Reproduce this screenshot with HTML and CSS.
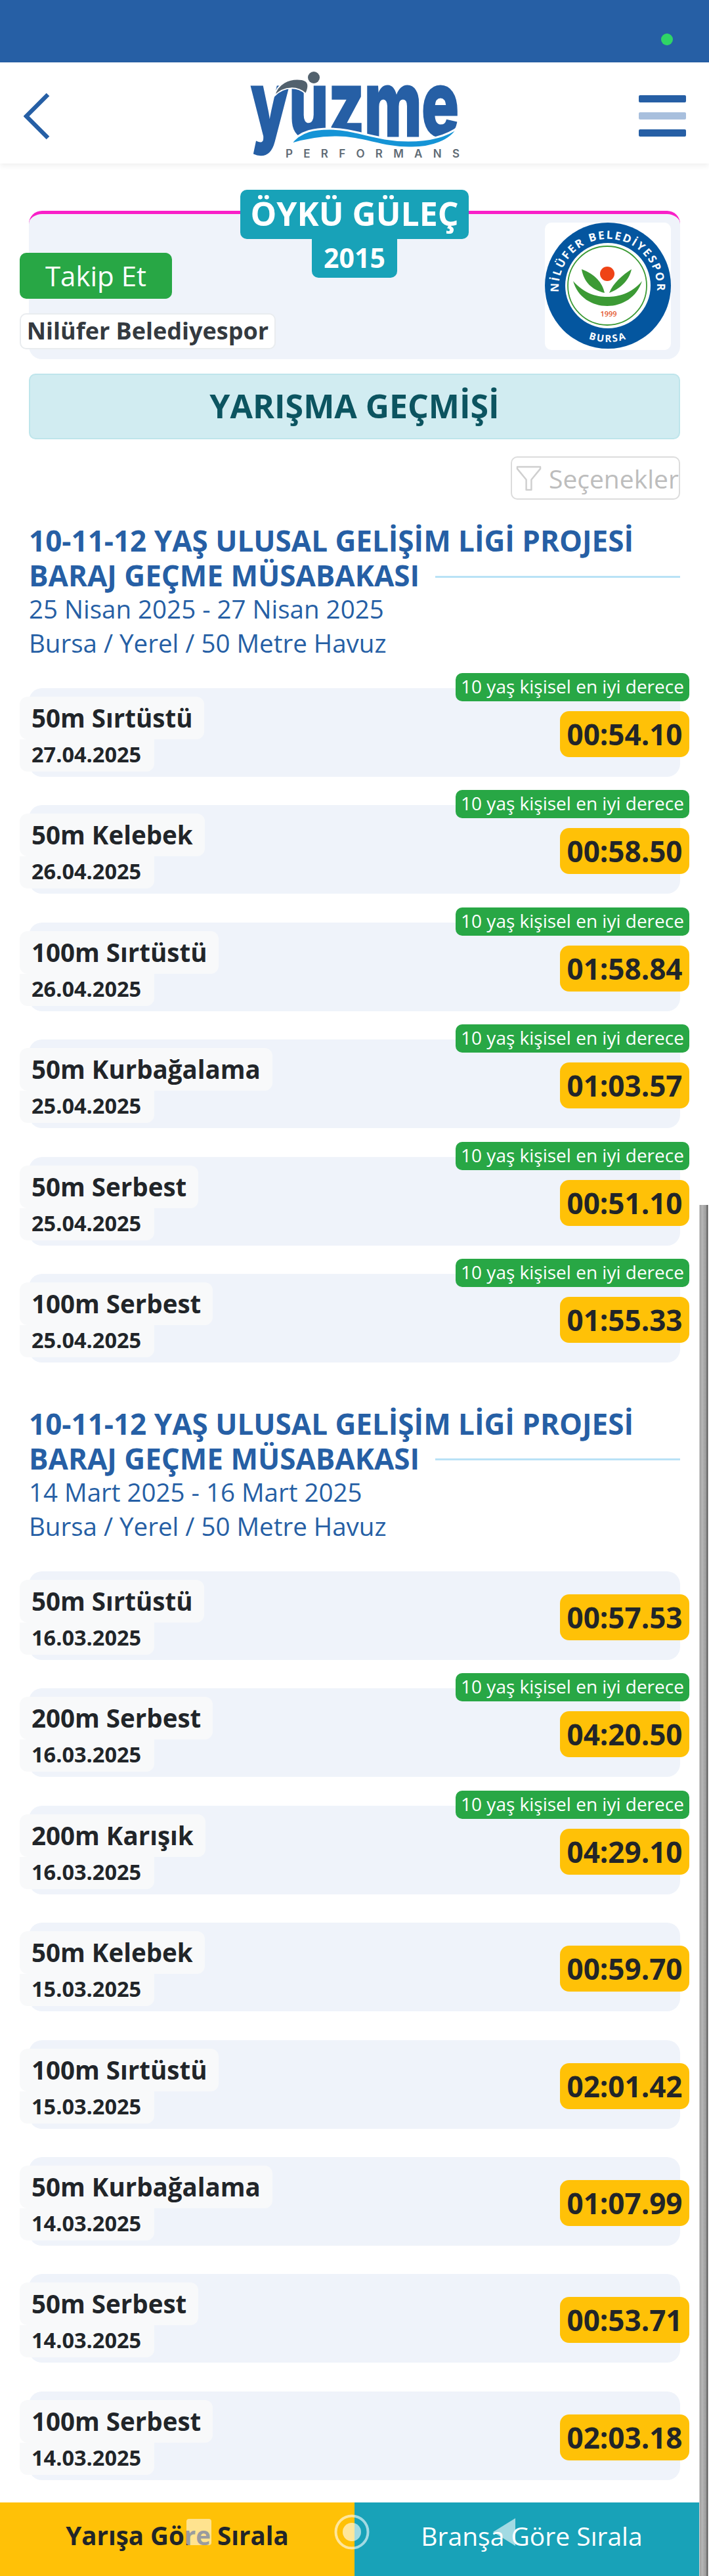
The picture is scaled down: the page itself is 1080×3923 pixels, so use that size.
FILE: index.html
```html
<!DOCTYPE html>
<html lang="tr">
<head>
<meta charset="utf-8">
<title>Yüzme Performans</title>
<link rel="stylesheet" href="styles.css">
</head>
<body>
<div class="page">
  <div class="status"><span class="status-dot"></span></div>
  <header class="topbar">
    <svg class="back" viewBox="0 0 40 72"><path d="M37 3 L4 36 L37 69" fill="none" stroke="#265fa5" stroke-width="6.5" stroke-linejoin="miter"/></svg>
    <svg class="logo" viewBox="0 0 320 132">
      <text class="logo-word" x="0" y="97" textLength="317" lengthAdjust="spacingAndGlyphs">yuzme</text>
      <path d="M36 36 C40 18 58 8 78 11 C88 13 90 20 84 33 C72 22 52 20 36 36 Z" fill="#52616d" stroke="#fff" stroke-width="2"/>
      <circle cx="96" cy="8" r="9" fill="#52616d"/>
      <path d="M60 110 C75 88 100 86 120 86 C160 86 190 104 240 104 C275 104 300 96 316 84 C305 105 275 116 241 115 C200 115 170 99 131 99 C105 99 85 102 60 110 Z" fill="#1594d6" stroke="#fff" stroke-width="3"/>
      <text class="logo-sub" x="53" y="130" textLength="265">PERFORMANS</text>
    </svg>
    <div class="menu"><span class="bar"></span><span class="bar bar-soft"></span><span class="bar"></span></div>
  </header>

  <main class="content">
    <section class="hero">
      <div class="hero-left">
        <button class="follow">Takip Et</button>
        <div class="club-name">Nilüfer Belediyespor</div>
      </div>
      <div class="hero-center">
        <div class="athlete">ÖYKÜ GÜLEÇ</div>
        <div class="year">2015</div>
      </div>
      <div class="hero-right">
        <div class="club-logo">
          <svg viewBox="0 0 192 192">
            <defs>
              <path id="arcTop" d="M22 112 A75 75 0 1 1 170 112"/>
              <path id="arcBot" d="M56 172 A85.5 85.5 0 0 0 136 172"/>
            </defs>
            <circle cx="96" cy="96" r="96" fill="#04569f"/>
            <circle cx="96" cy="96" r="65" fill="#fff"/>
            <circle cx="95" cy="96" r="60" fill="none" stroke="#3c9a35" stroke-width="1.8"/>
            <text class="crest-text"><textPath href="#arcTop" startOffset="50%" text-anchor="middle">NİLÜFER BELEDİYESPOR</textPath></text>
            <text class="crest-text crest-small"><textPath href="#arcBot" startOffset="50%" text-anchor="middle">BURSA</textPath></text>
            <circle cx="95" cy="78" r="11" fill="#ef4316"/>
            <path d="M56 71 C76 78 88 92 91 107 C72 103 59 90 56 71 Z M132 71 C128 90 112 102 98 107 C104 92 118 80 132 71 Z" fill="#3c9a35"/>
            <path d="M43 89 C60 108 78 113 95 113 C112 113 132 108 148 89 C140 114 118 127 95 127 C72 127 50 114 43 89 Z" fill="#3c9a35"/>
            <text class="crest-year" x="97" y="143" text-anchor="middle">1999</text>
          </svg>
        </div>
      </div>
    </section>

    <h1 class="band">YARIŞMA GEÇMİŞİ</h1>

    <div class="options-row">
      <button class="options">
        <svg class="funnel" viewBox="0 0 40 40"><path d="M2 2 H38 V5 L24 22 V38 H16 V22 L2 5 Z" fill="none" stroke="#cfcfcf" stroke-width="2.5" stroke-linejoin="round"/></svg>
        <span>Seçenekler</span>
      </button>
    </div>

    <section class="event">
      <h2 class="event-title">
        <span class="event-line">10-11-12 YAŞ ULUSAL GELİŞİM LİGİ PROJESİ</span>
        <span class="event-line event-line-rule"><span>BARAJ GEÇME MÜSABAKASI</span><i class="rule"></i></span>
      </h2>
      <p class="event-meta">25 Nisan 2025 - 27 Nisan 2025</p>
      <p class="event-meta">Bursa / Yerel / 50 Metre Havuz</p>
      <div class="rows">
        <article class="row"><div class="info"><div class="name">50m Sırtüstü</div><div class="date">27.04.2025</div></div><div class="result"><span class="best">10 yaş kişisel en iyi derece</span><span class="time">00:54.10</span></div></article>
        <article class="row"><div class="info"><div class="name">50m Kelebek</div><div class="date">26.04.2025</div></div><div class="result"><span class="best">10 yaş kişisel en iyi derece</span><span class="time">00:58.50</span></div></article>
        <article class="row"><div class="info"><div class="name">100m Sırtüstü</div><div class="date">26.04.2025</div></div><div class="result"><span class="best">10 yaş kişisel en iyi derece</span><span class="time">01:58.84</span></div></article>
        <article class="row"><div class="info"><div class="name">50m Kurbağalama</div><div class="date">25.04.2025</div></div><div class="result"><span class="best">10 yaş kişisel en iyi derece</span><span class="time">01:03.57</span></div></article>
        <article class="row"><div class="info"><div class="name">50m Serbest</div><div class="date">25.04.2025</div></div><div class="result"><span class="best">10 yaş kişisel en iyi derece</span><span class="time">00:51.10</span></div></article>
        <article class="row"><div class="info"><div class="name">100m Serbest</div><div class="date">25.04.2025</div></div><div class="result"><span class="best">10 yaş kişisel en iyi derece</span><span class="time">01:55.33</span></div></article>
      </div>
    </section>

    <section class="event">
      <h2 class="event-title">
        <span class="event-line">10-11-12 YAŞ ULUSAL GELİŞİM LİGİ PROJESİ</span>
        <span class="event-line event-line-rule"><span>BARAJ GEÇME MÜSABAKASI</span><i class="rule"></i></span>
      </h2>
      <p class="event-meta">14 Mart 2025 - 16 Mart 2025</p>
      <p class="event-meta">Bursa / Yerel / 50 Metre Havuz</p>
      <div class="rows">
        <article class="row"><div class="info"><div class="name">50m Sırtüstü</div><div class="date">16.03.2025</div></div><div class="result"><span class="time">00:57.53</span></div></article>
        <article class="row"><div class="info"><div class="name">200m Serbest</div><div class="date">16.03.2025</div></div><div class="result"><span class="best">10 yaş kişisel en iyi derece</span><span class="time">04:20.50</span></div></article>
        <article class="row"><div class="info"><div class="name">200m Karışık</div><div class="date">16.03.2025</div></div><div class="result"><span class="best">10 yaş kişisel en iyi derece</span><span class="time">04:29.10</span></div></article>
        <article class="row"><div class="info"><div class="name">50m Kelebek</div><div class="date">15.03.2025</div></div><div class="result"><span class="time">00:59.70</span></div></article>
        <article class="row"><div class="info"><div class="name">100m Sırtüstü</div><div class="date">15.03.2025</div></div><div class="result"><span class="time">02:01.42</span></div></article>
        <article class="row"><div class="info"><div class="name">50m Kurbağalama</div><div class="date">14.03.2025</div></div><div class="result"><span class="time">01:07.99</span></div></article>
        <article class="row"><div class="info"><div class="name">50m Serbest</div><div class="date">14.03.2025</div></div><div class="result"><span class="time">00:53.71</span></div></article>
        <article class="row"><div class="info"><div class="name">100m Serbest</div><div class="date">14.03.2025</div></div><div class="result"><span class="time">02:03.18</span></div></article>
      </div>
    </section>
  </main>

  <footer class="tabs">
    <button class="tab tab-active">Yarışa Göre Sırala</button>
    <button class="tab tab-other">Branşa Göre Sırala</button>
  </footer>

  <span class="nav-square"></span>
  <svg class="nav-circle" viewBox="0 0 54 54"><circle cx="27" cy="27" r="24.5" fill="none" stroke="#fff" stroke-opacity=".6" stroke-width="4"/><circle cx="27" cy="27" r="14" fill="#fff" fill-opacity=".6"/></svg>
  <svg class="nav-triangle" viewBox="0 0 38 46"><path d="M36 2 V44 L2 23 Z" fill="#fff" fill-opacity=".6"/></svg>
  <div class="scrollbar"></div>
</div>
</body>
</html>
```
FILE: styles.css
```css
* { box-sizing: border-box; }
html, body { margin: 0; padding: 0; }
body { background: #fff; font-family: "Open Sans", "Noto Sans", sans-serif; color: #212529; }
button { font-family: inherit; cursor: pointer; }

.page { position: relative; width: 1080px; height: 3923px; overflow: hidden; display: flex; flex-direction: column; }

.status { height: 95px; background: #265fa5; flex: none; position: relative; display: flex; justify-content: flex-end; align-items: flex-start; padding: 51px 55px 0 0; }
.status-dot { width: 18px; height: 18px; border-radius: 50%; background: #2fd566; }

.topbar { height: 154px; flex: none; background: #fff; display: flex; align-items: center; justify-content: space-between; padding: 0 35px 0 36px; box-shadow: 0 4px 8px rgba(0,0,0,.06); position: relative; }
.back { width: 40px; height: 72px; display: block; margin-top: 10px; }
.logo { position: absolute; left: 382px; top: 15px; width: 320px; height: 132px; overflow: visible; }
.logo-word { font-family: "Inter", "Liberation Sans", sans-serif; font-weight: 800; font-size: 137px; fill: #265fa5; stroke: #265fa5; stroke-width: 3px; }
.logo-sub { font-family: "Inter", "Liberation Sans", sans-serif; font-weight: 600; font-size: 17px; fill: #5f6b75; }
.menu { display: flex; flex-direction: column; gap: 15px; width: 72px; margin-top: 9px; }
.bar { height: 11px; border-radius: 2px; background: #265fa5; }
.bar-soft { background: #a8bfdd; }

.content { flex: 1; padding: 0 44px; min-height: 0; }

.hero { margin-top: 72px; height: 226px; border-top: 5px solid #f91fc8; border-radius: 20px; background: #eff3fa; display: grid; grid-template-columns: 1fr auto 1fr; }
.hero-left { min-width: 0; margin-left: -14px; padding-top: 59px; display: flex; flex-direction: column; align-items: flex-start; gap: 22px; white-space: nowrap; }
.follow { width: 232px; height: 70px; border: 0; border-radius: 10px; background: #28a745; color: #fff; font-size: 42px; line-height: 70px; padding: 0; }
.club-name { width: 390px; height: 55px; background: #fff; border: 2px solid #e9ecef; border-radius: 10px; font-size: 36px; font-weight: 700; color: #343a40; line-height: 49px; text-align: center; }
.hero-center { display: flex; flex-direction: column; align-items: center; margin-top: -37px; }
.athlete { width: 348px; height: 75px; background: #18a2b8; color: #fff; border-radius: 10px; font-size: 50px; font-weight: 700; line-height: 72px; text-align: center; white-space: nowrap; }
.year { width: 130px; height: 59px; background: #18a2b8; color: #fff; border-radius: 0 0 10px 10px; font-size: 41px; font-weight: 700; line-height: 56px; text-align: center; }
.hero-right { display: flex; justify-content: flex-end; padding: 13px 14px 0 0; }
.club-logo { width: 192px; height: 194px; background: #fff; border-radius: 10px; }
.club-logo svg { display: block; width: 192px; height: 192px; }
.crest-text { font-family: "Open Sans", sans-serif; font-weight: 700; font-size: 17px; letter-spacing: 2.4px; fill: #fff; }
.crest-small { font-size: 15px; letter-spacing: 2px; }
.crest-year { font-family: "Open Sans", sans-serif; font-weight: 600; font-size: 11px; fill: #e4572e; }

.band { margin: 22px 0 0; height: 100px; background: #d1ecf1; border: 2px solid #bee5eb; border-radius: 10px; color: #0c5460; font-size: 50px; font-weight: 700; line-height: 94px; text-align: center; }

.options-row { display: flex; justify-content: flex-end; margin-top: 26px; }
.options { width: 258px; height: 66px; border: 2px solid #dcdcdc; border-radius: 10px; background: #fff; color: #bdbdbd; font-size: 39px; display: flex; align-items: center; padding: 0 0 0 6px; gap: 11px; white-space: nowrap; }
.funnel { width: 39px; height: 39px; flex: none; }

.event { margin-top: 36px; }
.event + .event { margin-top: 67px; }
.event-title { margin: 0; font-size: 44px; line-height: 53px; font-weight: 700; color: #265fa5; }
.event-line { display: block; white-space: nowrap; }
.event-line-rule { display: flex; align-items: center; gap: 24px; }
.rule { display: block; flex: 1; height: 3px; background: #b9e2f6; margin-top: 3px; }
.event-meta { margin: 0; font-size: 38.5px; line-height: 52px; color: #265fa5; position: relative; top: -2px; }
.rows { margin-top: 41px; display: flex; flex-direction: column; gap: 43.4px; }

.row { height: 135px; background: #eff3fa; border-radius: 20px; display: flex; justify-content: space-between; }
.info { margin: 13px 0 0 -14px; display: flex; flex-direction: column; align-items: flex-start; }
.name { height: 65px; padding: 0 18px; background: #f8f9fa; border-radius: 12px; font-size: 38.5px; font-weight: 700; line-height: 64px; white-space: nowrap; }
.date { width: 205px; height: 49px; padding: 0 18px; background: #f8f9fa; border-radius: 0 0 12px 12px; font-size: 32.5px; font-weight: 700; line-height: 46px; }
.result { margin: -23px -14px 0 0; height: 128px; display: flex; flex-direction: column; align-items: flex-end; justify-content: flex-end; gap: 15px; }
.best { width: 356px; height: 43px; background: #28a745; color: #fff; border-radius: 10px; font-size: 28px; line-height: 41px; text-align: center; white-space: nowrap; }
.time { width: 197px; height: 70px; background: #ffc107; border-radius: 14px; font-size: 44px; font-weight: 700; line-height: 70px; text-align: center; }

.tabs { flex: none; height: 112px; display: flex; }
.tab { flex: 1; border: 0; padding: 0 0 12px; font-size: 39px; }
.tab-active { background: #ffc107; color: #212529; font-weight: 700; font-size: 38.5px; }
.tab-other { background: #18a2b8; color: #fff; }

.nav-square { position: absolute; left: 284px; top: 3836px; width: 38px; height: 40px; border-radius: 4px; background: rgba(255,255,255,.55); }
.nav-circle { position: absolute; left: 509px; top: 3829px; width: 54px; height: 54px; }
.nav-triangle { position: absolute; left: 749px; top: 3833px; width: 38px; height: 46px; }
.scrollbar { position: absolute; left: 1065px; top: 1835px; bottom: 0; width: 15px; background: linear-gradient(90deg, #ddd 0, #999 2px, #b8b8b8 4px, #999 11px, #555 12px, #555 13px, #fff 14px); }
```
